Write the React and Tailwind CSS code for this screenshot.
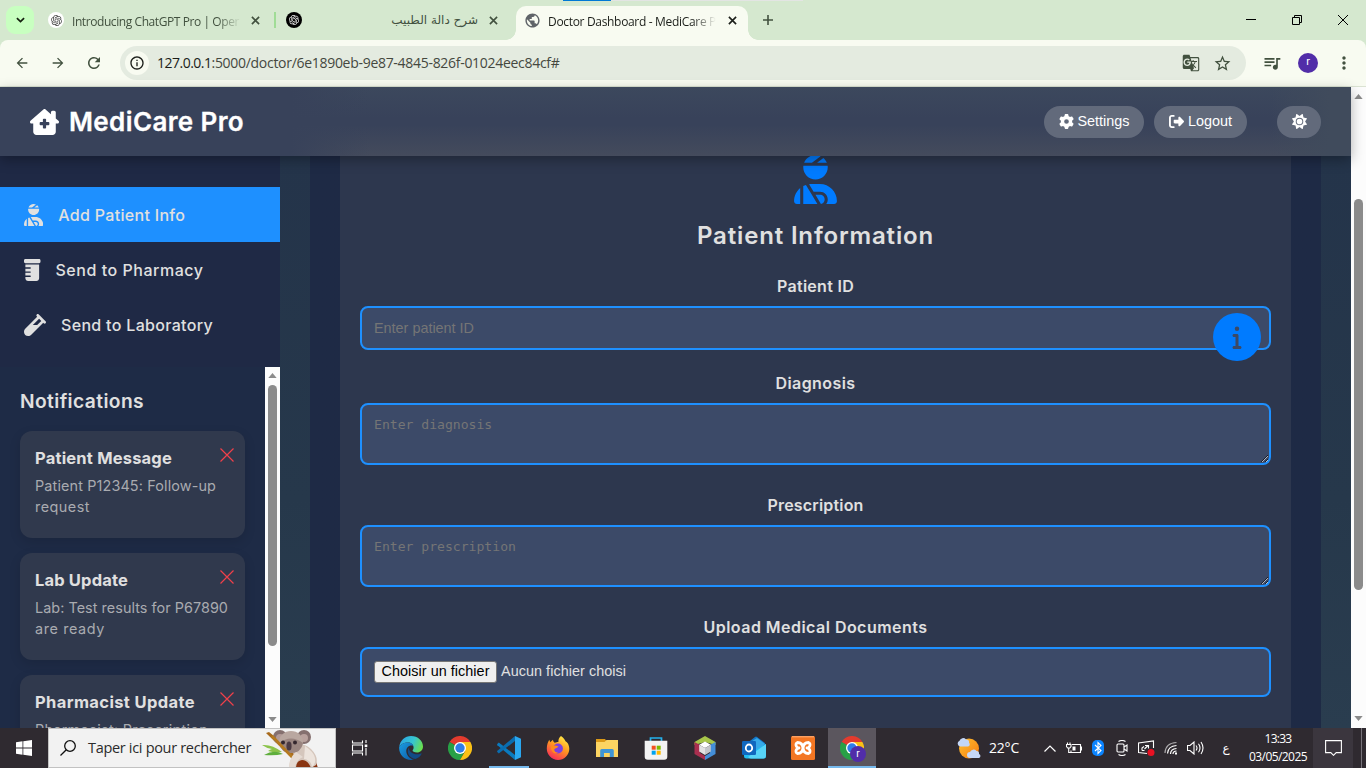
import React, { useLayoutEffect, useRef, useState } from "react";
import {
  FaHouseChimneyMedical,
  FaGear,
  FaRightFromBracket,
  FaSun,
  FaUserInjured,
  FaPrescriptionBottle,
  FaVial,
  FaInfo,
} from "react-icons/fa6";
import { MdGTranslate, MdStarBorder, MdQueueMusic, MdPublic, MdMoreVert, MdArrowBack, MdArrowForward, MdRefresh, MdInfoOutline } from "react-icons/md";
import { RiOpenaiFill } from "react-icons/ri";

/* Single line of text whose tracking is adjusted so that it spans `w` pixels. */
function Fit({ w, className = "", children }) {
  const ref = useRef(null);
  const [spacing, setSpacing] = useState(0);
  useLayoutEffect(() => {
    const natural = ref.current.getBoundingClientRect().width;
    setSpacing((w - natural) / children.length);
  }, [w, children]);
  return (
    <span ref={ref} className={"inline-block whitespace-nowrap " + className} style={{ letterSpacing: spacing + "px" }}>
      {children}
    </span>
  );
}

function Cross({ className = "" }) {
  return (
    <svg viewBox="0 0 10 10" className={"h-[9px] w-[9px] shrink-0 " + className} fill="none" stroke="currentColor" strokeWidth="1.8">
      <path d="M1 1l8 8M9 1l-8 8" />
    </svg>
  );
}

function TabStrip() {
  return (
    <div className="relative flex h-10 shrink-0 items-start bg-[#d5e8cf]">
      <div className="absolute left-[563px] top-0 h-px w-[48px] bg-[#0078d4]" />
      <div className="absolute left-[611px] top-0 h-px w-[192px] bg-[#e3e5e3]" />
      <div className="ml-[6px] mt-[6px] flex h-7 w-7 shrink-0 items-center justify-center rounded-[9px] bg-[#c8ffc0]">
        <svg viewBox="0 0 10 6" className="h-[6px] w-[9px]" fill="none" stroke="#15200f" strokeWidth="1.9">
          <path d="M1 1l4 3.8L9 1" />
        </svg>
      </div>
      <div className="flex h-10 w-[241px] shrink-0 items-center pl-[14px] text-[#42513f]">
        <div className="flex h-4 w-4 shrink-0 items-center justify-center rounded-full bg-white">
          <RiOpenaiFill className="h-[13px] w-[13px] text-[#444]" />
        </div>
        <div className="ml-2 w-[169px] shrink-0 overflow-hidden [mask-image:linear-gradient(90deg,#000_145px,transparent_169px)]">
          <Fit w={167} className="font-['Open_Sans',sans-serif] text-[12px] leading-5">Introducing ChatGPT Pro | Oper</Fit>
        </div>
        <Cross className="ml-[10px]" />
      </div>
      <div className="flex h-10 w-[241px] shrink-0 items-center text-[#42513f]">
        <div className="-ml-px h-4 w-[2px] bg-[#a0dc96]" />
        <div className="ml-[10px] flex h-4 w-4 shrink-0 items-center justify-center rounded-full bg-black">
          <RiOpenaiFill className="h-[12px] w-[12px] text-white" />
        </div>
        <span dir="rtl" className="ml-[8px] w-[168px] font-['DejaVu_Sans',sans-serif] text-[12px] leading-5">شرح دالة الطبيب</span>
        <Cross className="ml-[11px]" />
      </div>
      <div className="relative mt-[6px] flex h-[34px] w-[232px] shrink-0 items-center rounded-t-[10px] bg-[#f8fbf1] pb-[6px] pl-[8px] text-[#1c1f1a]">
        <div className="absolute -left-[10px] bottom-0 h-[10px] w-[10px] bg-[radial-gradient(circle_at_0_0,transparent_9.5px,#f8fbf1_10px)]" />
        <div className="absolute -right-[10px] bottom-0 h-[10px] w-[10px] bg-[radial-gradient(circle_at_100%_0,transparent_9.5px,#f8fbf1_10px)]" />
        <MdPublic className="h-[17px] w-[17px] shrink-0 text-[#5f6368]" />
        <div className="ml-[7px] w-[168px] shrink-0 overflow-hidden [mask-image:linear-gradient(90deg,#000_144px,transparent_168px)]">
          <Fit w={168} className="font-['Open_Sans',sans-serif] text-[12px] leading-5">Doctor Dashboard - MediCare P</Fit>
        </div>
        <Cross className="ml-[12px]" />
      </div>
      <svg viewBox="0 0 10 10" className="ml-[15px] mt-[15px] h-[10px] w-[10px] shrink-0" stroke="#42513f" strokeWidth="1.6">
        <path d="M5 0v10M0 5h10" />
      </svg>
      <div className="ml-auto flex h-10 items-center">
        <svg viewBox="0 0 10 10" className="h-[10px] w-[10px]" stroke="#000" strokeWidth="1"><path d="M0 4.5h10" /></svg>
        <svg viewBox="0 0 10 10" className="ml-[36px] h-[10px] w-[10px]" fill="none" stroke="#000" strokeWidth="1">
          <path d="M.5 2.5h7v7h-7zM2.5 2.5v-2h7v7h-2" />
        </svg>
        <svg viewBox="0 0 10 10" className="ml-[36px] mr-[18px] h-[10px] w-[10px]" stroke="#000" strokeWidth="1"><path d="M0 0l10 10M10 0L0 10" /></svg>
      </div>
    </div>
  );
}

function Toolbar() {
  return (
    <div className="h-[47px] shrink-0 bg-[#d5e8cf]">
      <div className="flex h-[47px] items-center rounded-t-[8px] border-b border-[#dbe3d3] bg-[#f8fbf1] text-[#42513f]">
        <MdArrowBack className="ml-[14px] h-4 w-4 shrink-0" />
        <MdArrowForward className="ml-[20px] h-4 w-4 shrink-0" />
        <MdRefresh className="ml-[19px] h-[18px] w-[18px] shrink-0" />
        <div className="ml-[17px] flex h-[34px] w-[1126px] shrink-0 items-center rounded-full bg-[#e4ebe0]">
          <div className="ml-[5px] flex h-6 w-6 items-center justify-center rounded-full bg-[#f8fbf1]">
            <MdInfoOutline className="h-4 w-4 text-[#1c1f1a]" />
          </div>
          <div className="ml-2 flex font-['Open_Sans',sans-serif] text-[14px] leading-5">
            <Fit w={54.5} className="text-[#1b1d19]">127.0.0.1</Fit>
            <Fit w={348} className="text-[#45483f]">:5000/doctor/6e1890eb-9e87-4845-826f-01024eec84cf#</Fit>
          </div>
          <MdGTranslate className="ml-auto h-[18px] w-[18px]" />
          <MdStarBorder className="ml-[13px] mr-[14px] h-[19px] w-[19px]" />
        </div>
        <MdQueueMusic className="ml-[16px] h-[20px] w-[20px] shrink-0" />
        <div className="ml-[16px] flex h-5 w-5 shrink-0 items-center justify-center rounded-full bg-[#512da8] pb-[2px] font-['Roboto',sans-serif] text-[11px] text-white">r</div>
        <MdMoreVert className="ml-[16px] h-5 w-5 shrink-0" />
      </div>
    </div>
  );
}

function Arrow({ down }) {
  return (
    <svg viewBox="0 0 10 6" className="h-[5px] w-[9px] shrink-0" fill="#8b8b8b">
      <path d={down ? "M0 0h10L5 6z" : "M0 6h10L5 0z"} />
    </svg>
  );
}

function PageHeader() {
  const pill = "flex h-8 items-center justify-center rounded-full bg-[#626a7b] font-['Liberation_Sans',sans-serif] text-[14.4px] text-white";
  return (
    <header className="relative z-10 flex h-[69px] shrink-0 items-center bg-[linear-gradient(90deg,#38425a_0,#38425a_290px,transparent_370px,transparent_1270px,#404b5c_1330px),linear-gradient(180deg,#3c485d_0%,#38425a_45%,#38425a_55%,#444b5c_100%)] pl-[30px] pr-[30px] shadow-[0_4px_12px_rgba(0,0,0,0.3)]">
      <FaHouseChimneyMedical className="h-[26px] w-[29px] text-white" />
      <Fit w={175} className="ml-[10px] font-['Inter',sans-serif] text-[26px] font-semibold leading-9 text-white [-webkit-text-stroke:0.3px]">MediCare Pro</Fit>
      <div className={pill + " ml-auto w-[100px]"}>
        <FaGear className="mr-1 h-[15px] w-[15px]" />
        <Fit w={52}>Settings</Fit>
      </div>
      <div className={pill + " ml-[10px] w-[93px]"}>
        <FaRightFromBracket className="mr-1 h-[15px] w-[15px]" />
        <Fit w={44}>Logout</Fit>
      </div>
      <div className={pill + " ml-[30px] w-[44px]"}>
        <FaSun className="h-[15px] w-[15px]" />
      </div>
    </header>
  );
}

function NavItem({ icon: Icon, iconClass, w, active, children }) {
  return (
    <a className={"flex h-[55px] items-center pl-6 text-[#e0e0e0] " + (active ? "bg-[#1e90ff]" : "")}>
      <Icon className={"mr-[15px] shrink-0 " + iconClass} />
      <Fit w={w} className="font-['Inter',sans-serif] text-[16px] font-medium leading-6">{children}</Fit>
    </a>
  );
}

function Notice({ title, titleW, lines }) {
  return (
    <div className="relative h-[107px] shrink-0 rounded-[12px] bg-[#30394d] px-[15px] pt-[15px] font-['Inter',sans-serif] shadow-[0_4px_12px_rgba(0,0,0,0.12)]">
      <div className="flex h-[24px] items-center">
        <Fit w={titleW} className="text-[16.5px] font-bold leading-6 text-[#e0e0e0]">{title}</Fit>
      </div>
      <div className="mt-[5px] flex flex-col">
        {lines.map(([text, w]) => (
          <div key={text} className="flex h-[21px] items-center">
            <Fit w={w} className="text-[14.4px] leading-[21px] text-[#a9abb0]">{text}</Fit>
          </div>
        ))}
      </div>
      <svg viewBox="0 0 14 14" className="absolute right-[11px] top-[17px] h-[14px] w-[14px]" stroke="#f0404a" strokeWidth="1.2">
        <path d="M.5 .5l13 13M13.5 .5l-13 13" />
      </svg>
    </div>
  );
}

function Sidebar() {
  return (
    <aside className="flex h-full w-[280px] shrink-0 flex-col bg-[#1f2945]">
      <nav className="flex h-[211px] shrink-0 flex-col pt-[31px]">
        <NavItem icon={FaUserInjured} iconClass="h-[22px] w-[19.25px]" w={127} active>Add Patient Info</NavItem>
        <NavItem icon={FaPrescriptionBottle} iconClass="h-[22px] w-[16.5px]" w={148}>Send to Pharmacy</NavItem>
        <NavItem icon={FaVial} iconClass="h-[22px] w-[22px]" w={152}>Send to Laboratory</NavItem>
      </nav>
      <section className="flex min-h-0 flex-1 bg-[#1e2b46]">
        <div className="flex w-[265px] flex-col gap-[15px] overflow-hidden px-5">
          <div className="mb-[-1px] flex h-[50px] shrink-0 items-end">
            <Fit w={124} className="font-['Inter',sans-serif] text-[19.2px] font-semibold leading-[31px] text-[#e0e0e0]">Notifications</Fit>
          </div>
          <Notice title="Patient Message" titleW={137} lines={[["Patient P12345: Follow-up", 181], ["request", 55]]} />
          <Notice title="Lab Update" titleW={93} lines={[["Lab: Test results for P67890", 193], ["are ready", 70]]} />
          <Notice title="Pharmacist Update" titleW={160} lines={[["Pharmacist: Prescription", 173], ["ready", 42]]} />
        </div>
        <div className="flex w-[15px] flex-col items-center bg-[#fcfcfc] py-[6px]">
          <Arrow />
          <div className="mt-[7px] h-[261px] w-[9px] rounded-full bg-[#8b8b8b]" />
          <div className="mt-auto"><Arrow down /></div>
        </div>
      </section>
    </aside>
  );
}

function Label({ w, className, children }) {
  return (
    <label className={"flex shrink-0 items-center justify-center text-[#e0e0e0] " + className}>
      <Fit w={w} className="font-['Inter',sans-serif] text-[16px] font-semibold leading-6">{children}</Fit>
    </label>
  );
}

function PatientForm() {
  const field = "block w-full shrink-0 rounded-[8px] border-2 border-[#1e90ff] bg-[#3c4a68] px-3 placeholder:text-[#757575] placeholder:opacity-100 outline-none ";
  return (
    <main className="min-w-0 flex-1 bg-[linear-gradient(180deg,#24344a,#26384b_60%,#2a3d4f)] pl-[30px] pr-[30px]">
      <div className="h-full bg-[linear-gradient(90deg,#1e2a45,#1f2945_50%,#1e2a45)] px-[30px]">
        <form className="relative flex h-full flex-col bg-[#2d374e] px-5">
          <FaUserInjured className="mx-auto -mt-px h-[49px] w-[43px] shrink-0 text-[#007bff]" />
          <h2 className="flex h-[64px] shrink-0 items-center justify-center">
            <Fit w={237} className="font-['Inter',sans-serif] text-[24px] font-semibold leading-9 text-[#e0e0e0]">Patient Information</Fit>
          </h2>
          <Label w={77} className="mb-[3px] h-[35px]">Patient ID</Label>
          <input placeholder="Enter patient ID" className={field + "h-[44px] font-['Liberation_Sans',sans-serif] text-[14.4px]"} />
          <Label w={80} className="h-[53px] pt-[12px]">Diagnosis</Label>
          <textarea placeholder="Enter diagnosis" className={field + "h-[62px] pt-[10px] font-['DejaVu_Sans_Mono',monospace] text-[13.1px] leading-5"} />
          <Label w={96} className="h-[60px] pt-[19px]">Prescription</Label>
          <textarea placeholder="Enter prescription" className={field + "h-[62px] pt-[10px] font-['DejaVu_Sans_Mono',monospace] text-[13.1px] leading-5"} />
          <Label w={224} className="h-[60px] pt-[19px]">Upload Medical Documents</Label>
          <div className={field + "h-[50px]"}>
            <div className="flex h-full items-center gap-1 font-['Liberation_Sans',sans-serif] text-[14.4px] text-[#e0e0e0]">
              <button type="button" className="flex h-[22px] w-[123px] items-center justify-center rounded-[3px] border border-[#767676] bg-[#efefef] text-black">
                <Fit w={108}>Choisir un fichier</Fit>
              </button>
              <Fit w={125}>Aucun fichier choisi</Fit>
            </div>
          </div>
          <div className="absolute right-[30px] top-[157px] flex h-12 w-12 items-center justify-center rounded-full bg-[#007bff]">
            <FaInfo className="h-6 w-[12px] text-[#3b4966]" />
          </div>
        </form>
      </div>
    </main>
  );
}

function WindowsLogo() {
  return (
    <svg viewBox="0 0 16 16" className="h-4 w-4" fill="#fff">
      <path d="M0 2.2L6.5 1.3v6.2H0zM7.3 1.2L16 0v7.5H7.3zM0 8.4h6.5v6.3L0 13.8zM7.3 8.4H16V16l-8.7-1.2z" />
    </svg>
  );
}

function Koala() {
  return (
    <svg viewBox="0 0 60 40" className="h-[40px] w-[60px]">
      <path d="M1 17q10-1 20 7-8 1-14-1 3-2 4-2-6-1-10-4z" fill="#8bc34a" />
      <path d="M3 27q10-6 19-1-8 2-19 1z" fill="#5fae3c" />
      <path d="M5 5l36 35h12L8 4z" fill="#a86a1c" />
      <path d="M30 32q10-9 24-1l3 9H34z" fill="#8a3512" />
      <path d="M29 18q12-5 21 3 8 8 5 16l-5 3q-3-8-9-8-6 1-6 8h-7q1-10 5-13z" fill="#d5c6bc" />
      <path d="M44 18q9 6 10 12t-3 9q-1-7-8-8z" fill="#ece3dc" />
      <circle cx="19" cy="9" r="7" fill="#85706f" />
      <circle cx="19" cy="10" r="4" fill="#b29a98" />
      <circle cx="43" cy="9" r="7" fill="#85706f" />
      <circle cx="43" cy="10" r="4" fill="#b9a19d" />
      <ellipse cx="30" cy="14" rx="12" ry="11" fill="#b9a7a0" />
      <path d="M18 15q12-9 24 0-2 10-12 10T18 15z" fill="#9a8580" />
      <path d="M10 9l20 21 4 2-3-5L12 7z" fill="#b57a20" />
      <ellipse cx="28" cy="18" rx="2.6" ry="4.6" fill="#4b3a42" />
      <circle cx="22" cy="14.500" r="2" fill="#33262d" />
      <circle cx="34" cy="14.500" r="2" fill="#33262d" />
      <path d="M35 24q-7 6-7 16h6q1-8 8-11z" fill="#e5dad2" />
    </svg>
  );
}

function TaskView() {
  return (
    <svg viewBox="0 0 18 16" className="h-4 w-[18px]" fill="none" stroke="#fff" strokeWidth="1.1">
      <path d="M1.500 .5v2.500h10v-2.500M1.500 15.500v-2.500h10v2.500M1.500 5h10v6h-10zM15 0v3M15 8v7.500" />
      <path d="M13.700 4.500h2.600v2.600h-2.600z" fill="#fff" stroke="none" />
    </svg>
  );
}

function Edge() {
  return (
    <svg viewBox="0 0 24 24" className="h-6 w-6">
      <defs>
        <linearGradient id="edgeTop" x1="0" y1="0.300" x2="1" y2="0.600">
          <stop offset="0" stopColor="#2aa4e4" />
          <stop offset=".55" stopColor="#37c6d0" />
          <stop offset="1" stopColor="#6be04a" />
        </linearGradient>
        <linearGradient id="edgeLow" x1="0" y1="0" x2="1" y2="1">
          <stop offset="0" stopColor="#1b9de2" />
          <stop offset="1" stopColor="#0c59a4" />
        </linearGradient>
      </defs>
      <path d="M.2 11C1 4.500 6 0 12 0c7 0 12 5 12 10.500 0 3.600-2.700 6-6 6-3 0-4.400-1.200-4.400-2 0-.6 1-1.200 1-3C14.600 8.500 12 6.500 9 6.500c-4 0-7.500 2-8.800 4.500z" fill="url(#edgeTop)" />
      <path d="M.2 11C1.500 8.500 5 6.500 9 6.500c2.500 0 4.600 1.200 5.300 3.200C9.500 8.600 7 12 7.300 15.500c.3 4 3.400 7.300 7.700 8.100-1 .3-2 .4-3 .4C5 24-.5 18 .2 11z" fill="url(#edgeLow)" />
      <path d="M10 11.800c-3 3-.6 10.600 6.500 11.200 3-1 5-3 6-5 .2-.6-.2-.8-.7-.5-5 2.400-12-.5-11.800-5.700z" fill="#114b86" />
    </svg>
  );
}

function Chrome() {
  return (
    <svg viewBox="0 0 24 24" className="h-6 w-6">
      <path d="M12 12L1.600 6A12 12 0 0 1 22.400 6z" fill="#e33b2e" />
      <path d="M12 12L1.600 6A12 12 0 0 0 12 24l5-9z" fill="#28a046" />
      <path d="M12 6h10.400A12 12 0 0 1 12 24l5.200-9z" fill="#fbc116" />
      <circle cx="12" cy="12" r="6" fill="#fff" />
      <circle cx="12" cy="12" r="4.700" fill="#2f7de9" />
    </svg>
  );
}

function VsCode() {
  return (
    <svg viewBox="0 0 24 24" className="h-6 w-6">
      <path d="M0 8.200L1.800 6.500 18 19v5L.4 9.200z" fill="#0a7abf" />
      <path d="M0 15.800l1.800 1.700L18 5V0L.4 14.800z" fill="#0a6db0" />
      <path d="M18 0l6 2.700v18.600L18 24z" fill="#2aa7f0" />
    </svg>
  );
}

function Firefox() {
  return (
    <svg viewBox="0 0 24 24" className="h-6 w-6">
      <defs>
        <linearGradient id="ffBody" x1="0.800" y1="0" x2="0.250" y2="1">
          <stop offset="0" stopColor="#fff04a" />
          <stop offset=".45" stopColor="#ff9a1f" />
          <stop offset="1" stopColor="#f7255c" />
        </linearGradient>
      </defs>
      <path d="M15 0c3 2 4 4 4.500 5.200 1.800.8 3.800 3.600 3.800 7.800A11.300 11.300 0 0 1 12 24 11.400 11.400 0 0 1 .8 12.500C.8 9 2 6 3.300 3.800l.9 2.400L7 3.800c0 1.500.7 2.400 1.800 3 2-1 3.200-.8 3.600-.8C12.200 3.500 13.300 1.200 15 0z" fill="url(#ffBody)" />
      <circle cx="12" cy="12.500" r="4.900" fill="#7a40e0" />
      <path d="M5 10.500c3-1.500 5-1 7.500 0-1.300 1.500-3 1.500-4 2.500-.8 2 1.500 3.800 4 3.500-4 2.500-8-1-7.500-6z" fill="#ff8a1c" />
    </svg>
  );
}

function Explorer() {
  return (
    <svg viewBox="0 0 22 18" className="h-[18px] w-[22px]">
      <path d="M0 0h9l1.500 2H22v16H0z" fill="#dc9a17" />
      <path d="M0 3h8.500l2-2H22v17H0z" fill="#fcd462" />
      <path d="M4.200 18v-6.500q0-1.500 1.500-1.500h10.600q1.500 0 1.500 1.500V18h-4v-4H8v4z" fill="#3f95d6" />
    </svg>
  );
}

function Store() {
  return (
    <svg viewBox="0 0 24 24" className="h-6 w-6">
      <path d="M6.500 6V2h11v4" fill="none" stroke="#25b1ec" strokeWidth="1.700" />
      <path d="M.7 4.700h22.600v16q0 3-3 3H3.700q-3 0-3-3z" fill="#f3f3f3" />
      <path d="M7.700 9.700h4v4h-4z" fill="#f25022" />
      <path d="M12.700 9.700h4v4h-4z" fill="#7fba00" />
      <path d="M7.700 14.700h4v4h-4z" fill="#00a4ef" />
      <path d="M12.700 14.700h4v4h-4z" fill="#ffb900" />
    </svg>
  );
}

function NetBeans() {
  return (
    <svg viewBox="0 0 24 24" className="h-6 w-6">
      <path d="M12 0l10.500 6v3L12 6 1.500 9V6z" fill="#a8c64a" />
      <path d="M1.500 6L7 9v8l5 3v4L1.500 18z" fill="#a92f4f" />
      <path d="M22.500 6L17 9v8l-5 3v4l10.500-6z" fill="#448ed8" />
      <path d="M12 5.500l5.800 3.200L12 12 6.200 8.700z" fill="#fff" />
      <path d="M6.200 8.700L12 12v7l-5.800-3.400z" fill="#e2e2e2" />
      <path d="M17.800 8.700L12 12v7l5.800-3.400z" fill="#c4c6ca" />
    </svg>
  );
}

function Outlook() {
  return (
    <svg viewBox="0 0 24 24" className="h-6 w-6">
      <path d="M4 8l9-7q1-.8 2 0l8 6v5H4z" fill="#1276c8" />
      <path d="M7 7l8-5 8 6-8 7z" fill="#36a9e8" />
      <path d="M2 11l11 3 11-6v12q0 2.500-2.500 2.500H4.500Q2 22.500 2 20z" fill="#22bdf2" />
      <path d="M24 8L6 21q2 2 4 1.500h11.500Q24 22 24 19.500z" fill="#57d3f7" />
      <rect x="0" y="5" width="14" height="14" rx="1.200" fill="#1067be" />
      <ellipse cx="7" cy="12" rx="3.200" ry="3.500" fill="none" stroke="#fff" strokeWidth="1.800" />
    </svg>
  );
}

function Xampp() {
  return (
    <svg viewBox="0 0 24 24" className="h-6 w-6">
      <rect width="24" height="24" rx="1.500" fill="#f37623" />
      <path d="M1 .8h22" stroke="#ffb27c" strokeWidth="1" />
      <path d="M6.500 6.500q5 0 5.500 5.500.5-5.500 5.500-5.500 2.500 1 1 4-1 1.500-2.500 1.500 1.500 0 2.500 1.500 1.500 3-1 4-5 0-5.500-5.500-.5 5.500-5.500 5.500-2.500-1-1-4 1-1.500 2.500-1.500-1.500 0-2.500-1.500-1.500-3 1-4z" fill="none" stroke="#fff" strokeWidth="2.800" strokeLinejoin="round" />
    </svg>
  );
}

function Slot({ active, running, children }) {
  return (
    <div className={"relative flex h-10 w-12 shrink-0 items-center justify-center " + (active ? "bg-[#5b565e]" : "")}>
      {children}
      {running && <div className={"absolute bottom-0 h-[2px] bg-[#76b9ed] " + (active ? "left-0 w-12" : "left-1 w-10")} />}
    </div>
  );
}

function Weather() {
  return (
    <svg viewBox="0 0 24 22" className="h-[22px] w-6">
      <defs>
        <linearGradient id="sunFill" x1="0" y1="0" x2="1" y2="1">
          <stop offset="0" stopColor="#ffc02e" />
          <stop offset="1" stopColor="#f57c13" />
        </linearGradient>
      </defs>
      <circle cx="12" cy="11.500" r="10" fill="url(#sunFill)" />
      <path d="M3 9.500a3 3 0 0 1-.5-5.700A3.700 3.700 0 0 1 9 2.500a2.600 2.600 0 0 1 3 3.300 2.100 2.100 0 0 1-1 3.700z" fill="#c3d6f6" />
      <path d="M13 21a3 3 0 0 1 0-6 3.800 3.800 0 0 1 6.500-1 2.600 2.600 0 0 1 2.500 3 2.100 2.100 0 0 1 0 4z" fill="#c6d8f8" />
    </svg>
  );
}

function Tray() {
  return (
    <div className="ml-auto flex h-10 shrink-0 items-center font-['Open_Sans',sans-serif] text-white">
      <Weather />
      <Fit w={30} className="ml-[8px] text-[14px] leading-5">22°C</Fit>
      <svg viewBox="0 0 12 7" className="ml-[25px] h-[7px] w-3" fill="none" stroke="#fff" strokeWidth="1.200"><path d="M.5 6.500L6 1l5.500 5.500" /></svg>
      <svg viewBox="0 0 16 12" className="ml-[10px] h-3 w-4" fill="none" stroke="#fff" strokeWidth="1.100">
        <path d="M6 2.500h8.500v8H5v-2M14.500 5h1v3h-1M1.500 .5v2M4 .5v2M.5 2.500h4.500v2L3.800 6H1.700L.5 4.500zM2.700 6v4.500H5" />
        <path d="M6.500 4.500h3v4h-3z" fill="#fff" stroke="none" />
      </svg>
      <svg viewBox="0 0 12 16" className="ml-[10px] h-4 w-3">
        <rect width="12" height="16" rx="5" fill="#0a84ff" />
        <path d="M3 5l6 5.500-3 3v-11l3 3L3 11" fill="none" stroke="#fff" strokeWidth="1.100" />
      </svg>
      <svg viewBox="0 0 12 16" className="ml-[12px] h-4 w-3" fill="none" stroke="#fff" strokeWidth="1.100">
        <rect x="1" y="4" width="7" height="8" rx="1" />
        <path d="M8 7l3-2v6L8 9M2.500 1.500q3.500-2 7 0M2.500 14.500q3.500 2 7 0" />
      </svg>
      <svg viewBox="0 0 17 16" className="ml-[10px] h-4 w-[17px]" fill="none" stroke="#fff" strokeWidth="1.100">
        <path d="M9 13.500l-8.500-1v-9.500l15-2v7M4 10.500V8l2-1.500M6.500 10.500h-2.500M7 5.500h3.500v3M10 5.500L6.500 9" />
        <circle cx="13" cy="12.500" r="3.500" fill="#e81123" stroke="none" />
      </svg>
      <svg viewBox="0 0 14 14" className="ml-[9px] h-[14px] w-[14px]" fill="none" stroke="#fff" strokeWidth="1.200">
        <path d="M1 12Q1.500 2 12.500 1.500" opacity=".6" />
        <path d="M3.500 12.500Q4 5 12.500 4.500M6.500 13Q6.500 8 12.500 7.500M9 13q0-2.800 3.500-3" />
        <path d="M11 11.500h2v2h-2z" fill="#fff" stroke="none" />
      </svg>
      <svg viewBox="0 0 17 14" className="ml-[9px] h-[14px] w-[17px]" fill="none" stroke="#fff" strokeWidth="1.100">
        <path d="M.5 4.500h2.500l4-3.500v12l-4-3.500H.5zM9 4.500q2 2.500 0 5M11.500 2.800q3 4.200 0 8.400M14 1q4 6 0 12" />
      </svg>
      <span className="ml-[18px] w-[8px] text-center font-['DejaVu_Sans',sans-serif] text-[12px] leading-4">ع</span>
      <div className="ml-[19px] flex w-[58px] flex-col items-center text-[12px] leading-[18px]">
        <Fit w={27}>13:33</Fit>
        <Fit w={58}>03/05/2025</Fit>
      </div>
      <div className="ml-[6px] flex h-10 w-10 items-center justify-center bg-[#3b363e]">
        <svg viewBox="0 0 17 16" className="h-4 w-[17px]" fill="none" stroke="#fff" strokeWidth="1.100">
          <path d="M.6 .6h15.800v12h-5.200L8.500 15.300l-2.700-2.700H.6z" />
        </svg>
      </div>
      <div className="ml-[8px] mr-[4px] h-10 w-px bg-[#77737a]" />
    </div>
  );
}

function Taskbar() {
  return (
    <div className="flex h-10 shrink-0 items-center bg-[#2f2a30]">
      <div className="flex h-10 w-12 shrink-0 items-center justify-center"><WindowsLogo /></div>
      <div className="flex h-10 w-[288px] shrink-0 items-center overflow-hidden border border-[#c2c2c2] bg-[#f2f2f2]">
        <svg viewBox="0 0 16 16" className="ml-[11px] h-4 w-4 shrink-0" fill="none" stroke="#111" strokeWidth="1.300">
          <circle cx="10" cy="6" r="5.300" />
          <path d="M6.300 9.800L.5 15.500" />
        </svg>
        <Fit w={163} className="ml-[12px] font-['Open_Sans',sans-serif] text-[14.5px] leading-5 text-[#2b2b2b]">Taper ici pour rechercher</Fit>
        <div className="ml-[10px] shrink-0"><Koala /></div>
      </div>
      <Slot><TaskView /></Slot>
      <div className="ml-[3px] flex gap-[1px]">
        <Slot><Edge /></Slot>
        <Slot><Chrome /></Slot>
        <Slot running><VsCode /></Slot>
        <Slot><Firefox /></Slot>
        <Slot><Explorer /></Slot>
        <Slot><Store /></Slot>
        <Slot><NetBeans /></Slot>
        <Slot><Outlook /></Slot>
        <Slot><Xampp /></Slot>
        <Slot active running>
          <Chrome />
          <div className="absolute left-[22px] top-[18px] flex h-4 w-4 items-center justify-center rounded-full bg-[#512da8] pb-px font-['Roboto',sans-serif] text-[10px] text-white">r</div>
        </Slot>
      </div>
      <Tray />
    </div>
  );
}

export default function App() {
  return (
    <div className="flex h-[768px] w-[1366px] flex-col overflow-hidden">
      <TabStrip />
      <Toolbar />
      <div className="flex min-h-0 flex-1">
        <div className="flex min-w-0 flex-1 flex-col">
          <PageHeader />
          <div className="flex min-h-0 flex-1">
            <Sidebar />
            <PatientForm />
          </div>
        </div>
        <div className="flex w-[15px] shrink-0 flex-col items-center bg-[#fcfcfc] py-[7px]">
          <Arrow />
          <div className="mt-[100px] h-[391px] w-[9px] rounded-full bg-[#8b8b8b]" />
          <div className="mt-auto"><Arrow down /></div>
        </div>
      </div>
      <Taskbar />
    </div>
  );
}
